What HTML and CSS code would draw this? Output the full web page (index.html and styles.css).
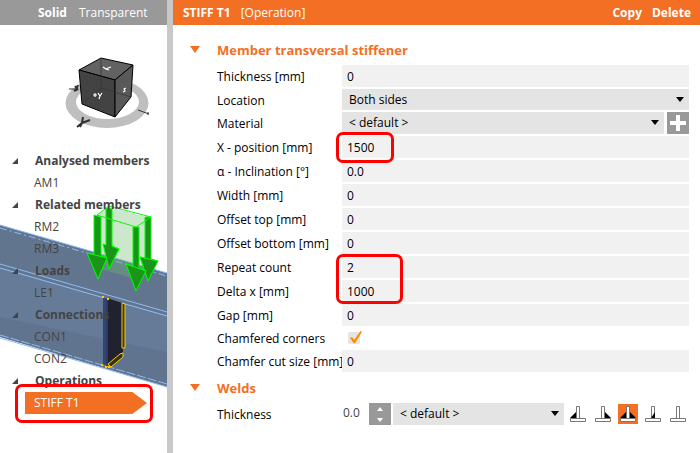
FILE: index.html
```
<!DOCTYPE html>
<html lang="en">
<head>
    <meta charset="UTF-8">
    <meta name="viewport" content="width=device-width, initial-scale=1.0">
    <title>STIFF T1 [Operation]</title>
    <link rel="stylesheet" href="styles.css">
</head>
<body>
    <!-- 3D view with the model tree -->
    <aside class="model">
        <header class="bar view-bar">
            <button class="bar-button active">Solid</button>
            <button class="bar-button">Transparent</button>
        </header>
        <div class="viewport">
            <svg class="scene" viewBox="0 25 167 428" preserveAspectRatio="xMinYMin meet" aria-hidden="true">
                <!-- Orientation cube -->
                <path fill="#bfbfbf" fill-rule="evenodd" d="M65.500 103a41.500 25 0 1 0 83 0a41.500 25 0 1 0 -83 0zM76 102a31.500 17 0 1 0 63 0a31.500 17 0 1 0 -63 0z"/>
                <path fill="none" stroke="#333" stroke-width="2" d="M77 127l5-4l8-3M82 123l1-6M82 123l-2 4M74 91l4-2M75 86l3 4M78 85l-2 5"/>
                <path fill="none" stroke="#333" d="M69 89h9M138 110l11 4M148 112v3"/>
                <g stroke="#000" stroke-linejoin="round">
                    <path fill="#626262" d="M79 70L101 58L133 65L115 80z"/>
                    <path fill="#434343" d="M79 70L115 80L115 117L82 104z"/>
                    <path fill="#595959" d="M115 80L133 65L131 97L115 117z"/>
                </g>
                <path fill="none" stroke="#333" stroke-width="0.700" d="M101 59V88L82 104M101 88L131 97"/>
                <path fill="none" stroke="#fff" stroke-width="1.200" d="M103 67l3 2l2-1l3-1M106 69l3 1M93 95h4M95 93v4M98 93l2 3l2-3M100 96l-1 3M126 88l-2 1l1 2l-2 1"/>

                <!-- Beam -->
                <path fill="#62758f" d="M0 225L167 273V387L0 337z"/>
                <path fill="#667b98" d="M0 267L167 315V382L0 334z"/>
                <path fill="#61748f" d="M0 317L167 352V384L0 335z"/>
                <g fill="none" stroke="#8fbcf2">
                    <path d="M0 225L167 273M0 264L167 312M0 268L167 316"/>
                    <path stroke-dasharray="7 3 2 3" d="M0 228L167 276"/>
                    <path stroke-dasharray="9 2" d="M0 335L167 384"/>
                    <path d="M0 338L167 387"/>
                </g>

                <!-- Stiffener -->
                <path fill="#20232f" d="M107 298L123 303V352L108 366z"/>
                <path fill="#344474" d="M103 297L108 299V366L103 364z"/>
                <path fill="none" stroke="#24305a" d="M107 298V366"/>
                <path fill="#353537" stroke="#fc0" d="M122 303L125 304V348H122z"/>
                <path fill="#353021" stroke="#fc0" d="M108 364L120 354L123 353V357L111 367z"/>
                <path fill="none" stroke="#fc0" stroke-width="2" stroke-dasharray="2 1" d="M102 297h3M107 299h3M101 365h3M105 367h5"/>

                <!-- Line load -->
                <path fill="#6cb96c" fill-opacity="0.350" d="M97 215L109 207L151 218V263L136 279L97 268z"/>
                <g fill="#199519" stroke="#0f0" stroke-linejoin="round">
                    <path d="M106 208L112 209V246L119 249L109 269L103 244L106 245z"/>
                    <path d="M145 217H151V259L158 261L148 281L140 257L145 258z"/>
                    <path d="M94 215L101 217V255L107 258L98 279L87 253L94 254z"/>
                    <path d="M133 227L139 227V267L146 271L136 291L126 264L133 266z"/>
                    <path fill="none" d="M87 253L107 258M126 264L146 271M112 246L119 249M140 257L158 261M97 215L109 206L151 217L136 227z"/>
                </g>
            </svg>

            <ul class="tree">
                <li class="group">Analysed members</li>
                <li><a href="#">AM1</a></li>
                <li class="group">Related members</li>
                <li><a href="#">RM2</a></li>
                <li><a href="#">RM3</a></li>
                <li class="group">Loads</li>
                <li><a href="#">LE1</a></li>
                <li class="group">Connections</li>
                <li><a href="#">CON1</a></li>
                <li><a href="#">CON2</a></li>
                <li class="group">Operations</li>
                <li class="marked"><a class="selected" href="#">STIFF T1</a></li>
            </ul>
        </div>
    </aside>

    <!-- Properties of the selected operation -->
    <main class="properties">
        <header class="bar title-bar">
            <h1>STIFF T1</h1>
            <span class="kind">[Operation]</span>
            <button class="bar-button active">Copy</button>
            <button class="bar-button active">Delete</button>
        </header>

        <form class="form">
            <h2>Member transversal stiffener</h2>
            <div class="row">
                <label for="thickness">Thickness [mm]</label>
                <input type="text" id="thickness" value="0">
            </div>
            <div class="row">
                <label for="location">Location</label>
                <span class="select short"><select id="location"><option>Both sides</option></select></span>
            </div>
            <div class="row">
                <label for="material">Material</label>
                <div class="with-button">
                    <span class="select"><select id="material"><option>&lt; default &gt;</option></select></span>
                    <button type="button" class="add" aria-label="Add material">
                        <svg width="22" height="22" viewBox="0 0 22 22"><path fill="#fff" d="M9 3h4v6h6v4h-6v6H9v-6H3V9h6z"/></svg>
                    </button>
                </div>
            </div>
            <div class="row marked-first">
                <label for="position">X - position [mm]</label>
                <input type="text" id="position" value="1500">
            </div>
            <div class="row">
                <label for="inclination">α - Inclination [°]</label>
                <input type="text" id="inclination" value="0.0">
            </div>
            <div class="row">
                <label for="width">Width [mm]</label>
                <input type="text" id="width" value="0">
            </div>
            <div class="row">
                <label for="offset-top">Offset top [mm]</label>
                <input type="text" id="offset-top" value="0">
            </div>
            <div class="row">
                <label for="offset-bottom">Offset bottom [mm]</label>
                <input type="text" id="offset-bottom" value="0">
            </div>
            <div class="marked-pair">
                <div class="row">
                    <label for="repeat">Repeat count</label>
                    <input type="text" id="repeat" value="2">
                </div>
                <div class="row">
                    <label for="delta">Delta x [mm]</label>
                    <input type="text" id="delta" value="1000">
                </div>
            </div>
            <div class="row">
                <label for="gap">Gap [mm]</label>
                <input type="text" id="gap" value="0">
            </div>
            <div class="row">
                <label for="chamfered">Chamfered corners</label>
                <input type="checkbox" id="chamfered" checked>
            </div>
            <div class="row">
                <label for="chamfer-size">Chamfer cut size [mm]</label>
                <input type="text" id="chamfer-size" value="0">
            </div>

            <h2>Welds</h2>
            <div class="row">
                <label for="weld">Thickness</label>
                <div class="weld">
                    <input type="text" class="weld-size" id="weld" value="0.0">
                    <button type="button" class="spin" aria-label="Change thickness">
                        <svg width="22" height="22" viewBox="0 0 22 22"><path fill="#fff" d="M11 4l3 4H8zM11 19l3-4H8z"/></svg>
                    </button>
                    <span class="select"><select aria-label="Weld material"><option>&lt; default &gt;</option></select></span>
                    <div class="weld-types">
                        <button type="button" aria-label="Fillet left">
                            <svg width="20" height="20" viewBox="0 0 20 20"><path d="M2 14L8 8V14z"/><path class="plate" d="M8.500 2.500h3v12h-3zM2.500 14.500h15v3h-15z"/></svg>
                        </button>
                        <button type="button" aria-label="Fillet right">
                            <svg width="20" height="20" viewBox="0 0 20 20"><path d="M18 14L12 8V14z"/><path class="plate" d="M8.500 2.500h3v12h-3zM2.500 14.500h15v3h-15z"/></svg>
                        </button>
                        <button type="button" class="on" aria-label="Fillet both">
                            <svg width="20" height="20" viewBox="0 0 20 20"><path d="M2 14L8 8V14zM18 14L12 8V14z"/><path class="plate" d="M8.500 2.500h3v12h-3zM2.500 14.500h15v3h-15z"/></svg>
                        </button>
                        <button type="button" aria-label="Bevel">
                            <svg width="20" height="20" viewBox="0 0 20 20"><path class="plate" d="M8.500 2.500h3v12h-3zM2.500 14.500h15v3h-15z"/><path d="M8 14L12 8V14z"/></svg>
                        </button>
                        <button type="button" aria-label="Butt">
                            <svg width="20" height="20" viewBox="0 0 20 20"><path class="plate" d="M8.500 2.500h3v12h-3zM2.500 14.500h15v3h-15z"/></svg>
                        </button>
                    </div>
                </div>
            </div>
        </form>
    </main>
</body>
</html>
```
FILE: styles.css
```
*, *::before, *::after {
    box-sizing: border-box;
}
body {
    display: flex;
    min-height: 100vh;
    margin: 0;
    background-color: #fff;
    color: #000;
    font-family: "Open Sans", "Noto Sans", sans-serif;
    font-size: 12px;
    line-height: 16px;
}
button, input, select {
    margin: 0;
    padding: 0;
    border: 0;
    border-radius: 0;
    background: none;
    color: inherit;
    font: inherit;
}
svg {
    display: block;
}

/* Header bars */
.bar {
    display: flex;
    align-items: center;
    height: 25px;
    color: #fff;
}
.view-bar {
    gap: 12px;
    padding-left: 38px;
    background-color: #999;
}
.title-bar {
    gap: 10px;
    padding: 0 9px 0 10px;
    background-color: #f36f24;
}
.title-bar h1 {
    margin: 0;
    font-size: 12px;
}
.kind {
    flex: 1;
}
.bar-button.active {
    font-weight: bold;
}

/* Model tree over the 3D view */
.model {
    display: flex;
    flex: 0 0 173px;
    flex-direction: column;
    min-width: 0;
    border-right: 6px solid #c8c8c8;
}
.viewport {
    position: relative;
    flex: 1;
    padding-top: 125px;
}
.scene {
    position: absolute;
    top: 0;
    left: 0;
    width: 100%;
}
.tree {
    position: relative;
    margin: 0;
    padding: 0 20px 0 25px;
    list-style: none;
    color: #444;
    white-space: nowrap;
}
.tree li {
    position: relative;
    padding-left: 9px;
    line-height: 22px;
}
.tree a {
    color: inherit;
    text-decoration: none;
}
.tree .group {
    padding-left: 10px;
    font-weight: bold;
}
.group::before {
    content: "";
    position: absolute;
    top: 8px;
    left: -13px;
    width: 6px;
    height: 6px;
    background-color: #444;
    clip-path: polygon(100% 0, 100% 100%, 0 100%);
}
.tree .marked {
    padding-left: 0;
}
.tree .selected {
    display: block;
    padding-left: 9px;
    background-color: #f36f24;
    color: #fff;
    clip-path: polygon(0 0, 88% 0, 100% 50%, 88% 100%, 0 100%);
}

/* Red callout frames */
.marked::after, .marked-first::after, .marked-pair::after {
    content: "";
    position: absolute;
    border: 3px solid #f00;
    border-radius: 7px;
    pointer-events: none;
}
.marked::after {
    top: -8px;
    right: -6px;
    bottom: -9px;
    left: -10px;
}
.marked-first, .marked-pair {
    position: relative;
}
.marked-first::after {
    top: -4px;
    bottom: -5px;
    left: 119px;
    width: 58px;
}
.marked-pair::after {
    top: -2px;
    bottom: -2px;
    left: 119px;
    width: 67px;
}

/* Property form */
.properties {
    flex: 1;
    min-width: 0;
}
.form {
    display: flex;
    flex-direction: column;
    gap: 2px;
    padding: 14px 11px 14px 44px;
}
.form h2 {
    position: relative;
    margin: 0 0 2px;
    color: #f36f24;
    font-size: 13px;
    line-height: 22px;
}
.form h2::before {
    content: "";
    position: absolute;
    top: 7px;
    left: -27px;
    border-top: 7px solid #f36f24;
    border-right: 5px solid transparent;
    border-left: 5px solid transparent;
}
.form h2:not(:first-child) {
    margin-top: 3px;
}
.row {
    display: grid;
    grid-template-columns: 125px 1fr;
    align-items: center;
}
.row label {
    padding-top: 2px;
    white-space: nowrap;
}
.marked-pair {
    display: grid;
    gap: 2px;
}
.form input[type="text"] {
    width: 100%;
    height: 22px;
    padding: 0 5px;
    background-color: #f1f1f1;
}
.form input[type="checkbox"] {
    appearance: none;
    position: relative;
    width: 12px;
    height: 12px;
    margin: 4px 6px;
    border-radius: 2px;
    background-color: #e4e4e4;
}
.form input[type="checkbox"]:checked::after {
    content: "";
    position: absolute;
    top: -1px;
    left: 2px;
    width: 12px;
    height: 12px;
    background-color: #ff8c00;
    clip-path: polygon(0 58%, 16% 50%, 36% 72%, 88% 0, 100% 6%, 42% 100%, 30% 100%);
}
.select {
    position: relative;
    flex: 1;
    min-width: 0;
}
.select select {
    display: block;
    appearance: none;
    width: 100%;
    height: 22px;
    padding: 0 20px 0 7px;
    background-color: #e4e4e4;
}
.select.short select {
    height: 21px;
}
.select::after {
    content: "";
    position: absolute;
    top: 8px;
    right: 5px;
    border-top: 5px solid #000;
    border-right: 4px solid transparent;
    border-left: 4px solid transparent;
    pointer-events: none;
}
.with-button {
    display: flex;
    gap: 3px;
}
.add, .spin {
    width: 22px;
    height: 22px;
    background-color: #999;
}

/* Weld row */
.weld {
    display: flex;
    gap: 2px;
}
.form .weld input.weld-size {
    width: 25px;
    padding: 0 0 4px 1px;
    background: none;
    color: #444;
}
.weld-types {
    display: flex;
    align-items: center;
    gap: 5px;
    padding: 0 1px 0 2px;
}
.weld-types .on {
    background-color: #f36f24;
}
.plate {
    fill: #fff;
    stroke: #777;
}
```
